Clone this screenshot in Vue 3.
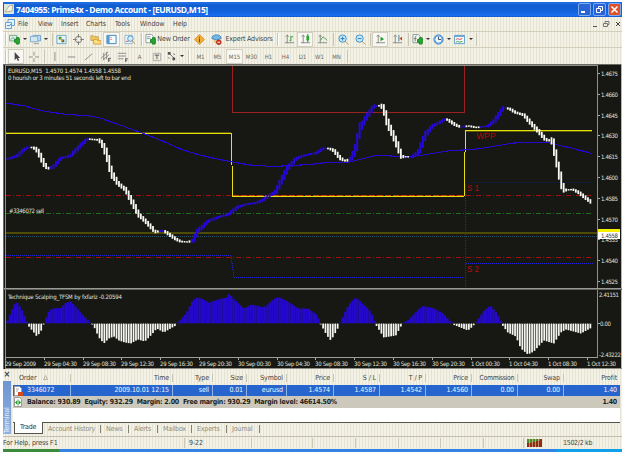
<template>
  <div class="window">
    <header class="title-bar">
      <svg class="app-icon" viewBox="0 0 10 10"><path d="M0 0h10v10H0z" fill="#dce6dc" /><path d="M1 8l4-6 4-1-1 6z" fill="#f8f5df" stroke="#9a9977" stroke-width=".7" /></svg>
      <h1>7404955: Prime4x - Demo Account - [EURUSD,M15]</h1>
      <div class="caption-buttons">
        <span class="caption"><i class="minimise"></i></span>
        <span class="caption"><svg viewBox="0 0 11 11"><path d="M4.5 4V2.5h4v4H7M2.5 4.5h4v4h-4z" fill="none" stroke="#fff" /></svg></span>
        <span class="caption close"><svg viewBox="0 0 11 11"><path d="M2.5 2.5l6 6m0-6l-6 6" stroke="#fff" stroke-width="1.6" /></svg></span>
      </div>
    </header>

    <nav class="menu-bar">
      <svg class="menu-icon" viewBox="0 0 10 10"><path d="M.5 3.500h6v6h-6zM3 3V.5h6.500v6H7" fill="#e6f2fa" stroke="#6aa3d2" /><path d="M2 7l1-1 1 1 2-2" fill="none" stroke="#4a91cc" /></svg>
      <span v-for="m in menus" :key="m.text" :style="{ width: m.w + 'px' }">{{ m.text }}</span>
      <svg class="child-buttons" viewBox="0 0 30 8"><path d="M2 6.500h4" stroke="#555" /><path d="M14 3V1.500h4v3h-2M12.500 3.500h4v3h-4z" fill="none" stroke="#777" /><path d="M25 2l4 4m0-4l-4 4" stroke="#444" /></svg>
    </nav>

    <div v-for="(bar, b) in toolbars" :key="b" class="toolbar">
      <span
        v-for="(t, i) in bar"
        :key="i"
        class="tool"
        :class="[t.type, { pressed: t.pressed }]"
        :style="{ width: t.w + 'px' }"
      >
        <svg v-if="t.icon" viewBox="0 0 12 12">
          <path v-for="(p, n) in icons[t.icon]" :key="n" :d="p[0]" :fill="p[1]" :stroke="p[2] || 'none'" />
        </svg>
        <template v-else>{{ t.text }}</template>
      </span>
    </div>

    <svg class="chart" viewBox="3 64 619 305" shape-rendering="crispEdges">
      <rect x="3" y="64" width="619" height="305" fill="#171813" />
      <path d="M3 64.500H622M3.500 64V369" stroke="#6b6a62" />
      <path d="M5.500 369V65.500H597.500V358" fill="none" stroke="#8d8f88" />
      <path d="M621.500 64V369" stroke="#b9b7a8" />

      <!-- horizontal levels -->
      <path d="M6 195.500H593M6 257.500H593" class="level" stroke="#a20d0d" />
      <path d="M6 213.500H593" class="level" stroke="#1f6e1f" />
      <rect x="6" y="232" width="591" height="2" fill="#4e4b06" />
      <path d="M6 236.500H597" stroke="#24506a" stroke-dasharray="1 1" />

      <!-- pivot steps -->
      <path d="M232.500 66V112.500H464.500V66" fill="none" stroke="#9b2020" />
      <path d="M6 255.500H231.500M233.500 277.500H464M466 263.500H593M231.500 256v7M232.500 263v7M233.500 270v7" fill="none" stroke="#1f24d8" stroke-dasharray="1 1" />
      <path d="M465.500 182.500H593" stroke="#0d1c38" />
      <path d="M465.500 184V288" stroke="#1f24d8" stroke-dasharray="1 1" />
      <path d="M6 132.500H231M466 131.500H592" stroke="#5c5606" />
      <path d="M6 133.500H231.500L232.500 196.500H464L465.500 130.500H592" fill="none" stroke="#e6e010" />
      <path d="M233 195.500H464" stroke="#c24a06" stroke-dasharray="6 2" />

      <polyline :points="average" fill="none" stroke="#2409d0" stroke-width="1.100" />
      <g shape-rendering="geometricPrecision">
        <rect v-for="c in candles" :key="c.x" :x="c.x" :y="c.y" :width="c.up ? 2 : 1.8" :height="c.h" :fill="c.up ? '#2409d8' : '#fbfbf6'" />
        <rect v-for="c in histogram" :key="c.x" :x="c.x" :y="c.y" :width="c.up ? 2.43 : 1.75" :height="c.h" :fill="c.up ? '#2408cc' : '#f6f6f0'" />
      </g>

      <path d="M4 288.500H622" stroke="#999b94" /><path d="M4 289.500H622" stroke="#5f625c" />
      <path d="M6 323.500H592" stroke="#171813" stroke-dasharray="1 1" opacity=".5" />

      <path d="M5 357.500H598" stroke="#9b9d96" /><path d="M5 368.500H622" stroke="#8d8f88" />
      <path v-for="t in times" :key="t.text" :d="`M${t.x + 0.500} 358v2`" stroke="#aaa" />
      <path v-for="p in prices" :key="p.text" :d="`M598 ${p.y}h2`" stroke="#aaa" />
      <path d="M598 323.500h2" stroke="#aaa" />

      <g class="chart-text">
        <text x="8" y="73" textLength="113">EURUSD,M15&#160; 1.4570 1.4574 1.4558 1.4558</text>
        <text x="8" y="79.500" textLength="123">0 hourish or 3 minutes 51 seconds left to bar end</text>
        <text x="9" y="212.500" textLength="35">#3346072 sell</text>
        <text x="8" y="299" textLength="114">Technique Scalping_TFSM by fxfariz -0.20594</text>
        <text v-for="p in prices" :key="p.text" x="601" :y="p.y + 2.500" textLength="17">{{ p.text }}</text>
        <text x="599" y="297" textLength="20">2.41151</text>
        <text x="600" y="326" textLength="11">0.00</text>
        <text x="599" y="356.500" textLength="22">-2.43222</text>
        <text v-for="t in times" :key="t.text" :x="t.x" y="366" :textLength="t.w">{{ t.text }}</text>
      </g>
      <rect x="598" y="229" width="22" height="4" fill="#f5ef00" />
      <rect x="598" y="232" width="22" height="7" fill="#fff" />
      <text x="601" y="238" textLength="17" class="chart-text current">1.4558</text>
      <g class="pivot-text">
        <text x="476.500" y="138.500" textLength="19" lengthAdjust="spacingAndGlyphs">WPP</text>
        <text x="467" y="191" textLength="12" lengthAdjust="spacingAndGlyphs">S 1</text>
        <text x="467" y="271.500" textLength="12" lengthAdjust="spacingAndGlyphs">S 2</text>
      </g>
    </svg>

    <section class="terminal">
      <aside>
        <b>×</b>
        <span>Terminal</span>
      </aside>
      <div class="panel">
        <div class="row head">
          <span v-for="(c, i) in columns" :key="i" :style="{ width: c.w + 'px' }">{{ c.head }}<svg v-if="i === 0" viewBox="0 0 5 5"><path d="M.5 4.500l2-4 2 4z" fill="none" stroke="#b3b09f" /></svg></span>
        </div>
        <div class="row order">
          <svg class="row-icon" viewBox="0 0 9 10"><path d="M.5.500h5l2 2v7h-7z" fill="#fff" stroke="#a99" /><path d="M4 6h5v4H4z" fill="#d24b20" /><path d="M2 3h3M2 5h2" stroke="#aaa" /></svg>
          <span v-for="(c, i) in columns" :key="i" :style="{ width: c.w + 'px' }">{{ c.value }}</span>
        </div>
        <div class="row balance">
          <svg class="row-icon" viewBox="0 0 9 10"><path d="M.5.500h5l2 2v7h-7z" fill="#fff" stroke="#999" /><path d="M1 5.500l2-2v4zM7 5.500l-2-2v4z" fill="#1c9a28" /><path d="M4 2.500v6" stroke="#1c9a28" /></svg>
          <strong>Balance: 930.89&#160; Equity: 932.29&#160; Margin: 2.00&#160; Free margin: 930.29&#160; Margin level: 46614.50%</strong>
          <strong class="total">1.40</strong>
        </div>
        <div class="blank"></div>
        <div class="tabs">
          <span class="active">Trade</span>
          <span v-for="t in tabs" :key="t.text" :style="{ width: t.w + 'px' }">{{ t.text }}</span>
        </div>
      </div>
    </section>

    <footer class="status-bar">
      <span v-for="(s, i) in status" :key="i" :style="{ width: s.w + 'px' }">{{ s.text }}</span>
      <svg viewBox="0 0 15 8"><path d="M0 0h15v8H0z" fill="#8d2d14" /><path d="M0 0h5v4H0zM5 0h4v3H5zM9 0h4v2H9z" fill="#4f8a2c" /><path d="M2.500 0v8M5.500 0v8M8.500 0v8M11.500 0v8" stroke="#e9c9a8" stroke-width=".6" /></svg>
      <em>1502/2 kb</em>
    </footer>
    <div class="taskbar"><i class="start"></i><i class="tray"></i></div>
  </div>
</template>

<script setup>
const menus = [
  { text: 'File', w: 20 },
  { text: 'View', w: 23 },
  { text: 'Insert', w: 25 },
  { text: 'Charts', w: 29 },
  { text: 'Tools', w: 25 },
  { text: 'Window', w: 33 },
  { text: 'Help', w: 20 }
]

const icon = (name, w, pressed = false) => ({ icon: name, w, pressed })
const label = (text, w, pressed = false) => ({ text, w, pressed, type: 'period' })
const sep = (w) => ({ type: 'sep', w })
const drop = (w) => ({ type: 'drop', text: '', w })

const toolbars = [
  [
    { type: 'grip', w: 5 }, icon('newChart', 13), drop(7), icon('profiles', 14), drop(8), sep(4),
    icon('market', 15), icon('data', 18), icon('navigator', 16), icon('terminal', 17, true), icon('tester', 19),
    { type: 'grip', w: 5 }, icon('newOrder', 12), { text: 'New Order', w: 35, type: 'words' },
    icon('meta', 17), icon('expert', 16), { text: 'Expert Advisors', w: 50, type: 'words' },
    { type: 'grip', w: 8 }, icon('bars', 15), icon('candle', 16, true), icon('line', 18), sep(4),
    icon('zoomIn', 16), icon('zoomOut', 18), sep(3), icon('scroll', 16, true), icon('shift', 18), sep(4),
    icon('indicator', 14), drop(7), icon('clock', 14), drop(7), icon('template', 15), drop(7), sep(4)
  ],
  [
    { type: 'grip', w: 5 }, icon('pointer', 16, true), icon('cross', 18), sep(4),
    icon('vertical', 17), icon('horizontal', 17), icon('trend', 17), icon('channel', 17), icon('fibo', 17),
    label('A', 17), icon('textBox', 17), icon('arrows', 13), drop(8), { type: 'grip', w: 6 },
    label('M1', 17), label('M5', 17), label('M15', 17, true), label('M30', 17), label('H1', 17),
    label('H4', 17), label('D1', 17), label('W1', 17), label('MN', 17), sep(4)
  ]
]

const none = 'none'
const plus = ['M6 6h2V4h3v2h2v3h-2v2H8V9H6z', '#29a531', '#16841f']
const axes = 'M3.500 1v9M1 9.500h10M2 3l1.500-2L5 3'
const lens = (sign) => [
  ['M8 8l3.500 3.500', none, '#c89032'],
  ['M7 7l3.500 4', none, '#dfb76a'],
  ['M1 5a4 4 0 1 0 8 0a4 4 0 1 0-8 0', '#c5e5f8', '#388fc9'],
  [sign, none, '#2478b8']
]
// every entry is a list of [path, fill, stroke] on a 12 x 12 grid
const icons = {
  newChart: [['M.5 1.500h8v6h-8z', '#dcefe0', '#6ca58b'], ['M2 6l2-2 2 1', none, '#4b8fb0'], plus],
  profiles: [['M3.500 1.500h8v6h-8z', '#bdddf2', '#6aa3ca'], ['M.5 2.500h8v6h-8z', '#d3e6f3', '#7fa9cb'], ['M4 10.500h6', none, '#999']],
  market: [['M1 1.500h10v9H1z', '#e9f5fa', '#6aa9cb'], ['M3 3h3v3H3z', '#2b9a3c'], ['M6 6h3v3H6z', '#3c6538'], ['M4 4l4 4', none, '#d59b18']],
  data: [['M2.500 6a3.500 3.500 0 1 0 7 0a3.500 3.500 0 1 0-7 0', none, '#777'], ['M6 0v4M6 8v4M0 6h4M8 6h4', none, '#777']],
  navigator: [['M1 2h3l1 1h4v4H1z', '#f1ca5b', '#c99b47'], ['M4 6h3l1 1h4v4H4z', '#ffdf7b', '#d59d45']],
  terminal: [['M1 1.500h10v9H1z', '#f4fafd', '#367fba'], ['M1 1h3v9H1z', '#559dd0'], ['M5 4h1M5 6h1', none, '#c33']],
  tester: [['M1 1.500h8v9H1z', '#eef6fb', '#8fb9d3'], ['M4 5a3 3 0 1 0 6 0a3 3 0 1 0-6 0', '#d7ecf8', '#4592c5'], ['M9 7l3 4', none, '#c8963c'], ['M2 8h3', none, '#c55']],
  newOrder: [['M1 .500h6l2 2v7H1z', '#fff', '#899'], ['M2 3h4M2 5h4', none, '#7c9ab3'], plus],
  meta: [['M6 .500L11.500 6 6 11.500.5 6z', '#efac39', '#d59a3c'], ['M6 3v1M6 5v4', none, '#63430d']],
  expert: [['M1 5q0-4 5-4t5 4q-5 3-10 0z', '#74b8e7', '#3b83bb'], ['M3 6q3 2 6 0v3q-3 2-6 0z', '#e9c078'], ['M6 9a2.500 2.500 0 1 0 5 0a2.500 2.500 0 1 0-5 0', '#d83c22', '#a92414'], ['M7 9h3', none, '#fff']],
  bars: [[axes, none, '#888'], ['M7.500 2v6M6 7h1M8 3h2', none, '#249c31']],
  candle: [[axes, none, '#888'], ['M8.500 0v9', none, '#15801f'], ['M7 2h3v5H7z', '#27a934']],
  line: [[axes, none, '#888'], ['M4 7q2-5 4-3l3 3', none, '#319a3a']],
  zoomIn: lens('M3 5h4M5 3v4'),
  zoomOut: lens('M3 5h4'),
  scroll: [[axes, none, '#888'], ['M6 3l4 2.500-4 2.500z', '#20a02c']],
  shift: [[axes, none, '#888'], ['M7.500 1v7', none, '#457fa8'], ['M8 5l3-2v4z', '#cc3c20']],
  indicator: [['M1 .500h6l2 2v7H1z', '#f4f5f0', '#899'], ['M5 2Q3 2 3.500 8M2 5h3', none, '#777'], plus],
  clock: [['M1 6a5 5 0 1 0 10 0a5 5 0 1 0-10 0', '#eaf5ff', '#1d70bd'], ['M2 6a4 4 0 1 0 8 0a4 4 0 1 0-8 0', none, '#4a9cdf'], ['M6 3v3h3', none, '#345']],
  template: [['M.5 1.500h11v9H.5z', '#f3f9fd', '#5b9bc8'], ['M1 2.500h10', none, '#3b88c0'], ['M2 6l2-1 2 1 3-1', none, '#c44'], ['M2 9l2-1 2 1 3-1', none, '#3a9a40']],
  pointer: [['M4 1v9l2-2 1.500 3 1.500-1-1.500-2.500H10z', '#444']],
  cross: [['M6.500 1v4M6.500 8v4M1 6.500h4M8 6.500h4', none, '#888']],
  vertical: [['M6.500 1v10', none, '#888']],
  horizontal: [['M2 6.500h8', none, '#888']],
  trend: [['M2 10l8-7', none, '#888']],
  channel: [['M1 8l8-7M3 10l7-6M4 2v8M7 1v8', none, '#888'], ['M9 8h3M9 10h2M9.500 8v4', none, '#555']],
  fibo: [['M1 2.500h9M1 5.500h9M1 8.500h6', none, '#888'], ['M9.500 8v4M9 8.500h3M9 10.500h2', none, '#555']],
  textBox: [['M2.500 2.500h8v8h-8z', none, '#aaa'], ['M4 4.500h5M6.500 4v5', none, '#555']],
  arrows: [['M4 3l5 5', none, '#777'], ['M2 1h3v3H2zM7 7h3v3H7z', '#555'], ['M8 3l2 1M2 7l2 1', none, '#777']]
}

const columns = [
  { head: 'Order', value: '3346072', w: 58 },
  { head: 'Time', value: '2009.10.01 12:15', w: 102 },
  { head: 'Type', value: 'sell', w: 40 },
  { head: 'Size', value: '0.01', w: 34 },
  { head: 'Symbol', value: 'eurusd', w: 40 },
  { head: 'Price', value: '1.4574', w: 47 },
  { head: 'S / L', value: '1.4587', w: 46 },
  { head: 'T / P', value: '1.4542', w: 46 },
  { head: 'Price', value: '1.4560', w: 46 },
  { head: 'Commission', value: '0.00', w: 46 },
  { head: 'Swap', value: '0.00', w: 46 },
  { head: 'Profit', value: '1.40', w: 56 }
]

const tabs = [
  { text: 'Account History', w: 58 },
  { text: 'News', w: 28 },
  { text: 'Alerts', w: 29 },
  { text: 'Mailbox', w: 34 },
  { text: 'Experts', w: 35 },
  { text: 'Journal', w: 33 }
]

const status = [
  { text: 'For Help, press F1', w: 182 },
  { text: '9-22', w: 67 },
  { text: '', w: 61 },
  { text: '', w: 43 },
  { text: '', w: 43 },
  { text: '', w: 42 },
  { text: '', w: 43 },
  { text: '', w: 40 }
]

const prices = ['1.4675', '1.4660', '1.4645', '1.4630', '1.4615', '1.4600', '1.4585', '1.4570', '1.4555', '1.4540', '1.4525']
  .map((text, i) => ({ text, y: 73.5 + i * 20.8 }))

const times = [
  '29 Sep 2009', '29 Sep 04:30', '29 Sep 08:30', '29 Sep 12:30', '29 Sep 16:30', '29 Sep 20:30',
  '30 Sep 00:30', '30 Sep 04:30', '30 Sep 08:30', '30 Sep 12:30', '30 Sep 16:30', '30 Sep 20:30',
  '1 Oct 00:30', '1 Oct 04:30', '1 Oct 08:30', '1 Oct 12:30'
].map((text, i) => ({ text, x: Math.round(5 + i * 38.8), w: text.startsWith('1 ') ? 29 : i === 0 ? 31 : 33 }))

const average = '6,103 25,106 43,111 63,114 90,116 100,118 120,125 142,133 160,140 183,150 200,155 217,159 233,162 250,165 273,166.5 310,164.5 327,162.5 348,162.5 373,156 383,155.5 407,157 420,155.5 447,151 477,149 513,143 547,142.5 573,148.5 592,153.5'

const pricePath = [
  [6, 159], [10, 158], [17, 155.5], [22, 150.5], [27, 147.5], [32, 147.5], [36, 150], [39, 155], [44, 165], [48, 168.5],
  [52, 167], [60, 158.5], [70, 155.5], [80, 145], [87, 139], [98, 140], [102, 145], [106, 155], [111, 173], [117, 183],
  [125, 190], [132, 203], [138, 214.5], [147, 223.5], [155, 232], [161, 230.5], [165, 232], [175, 239], [180, 241.5],
  [187, 242], [192, 240.5], [197, 231], [207, 221.5], [215, 218], [228, 214], [237, 207], [247, 204], [255, 203],
  [262, 200], [267, 196.5], [275, 191.5], [280, 181.5], [287, 168], [295, 159], [303, 155.5], [315, 153], [323, 148.5],
  [328, 148.5], [333, 150.5], [340, 158.5], [345, 161], [350, 158.5], [355, 148], [359, 129], [365, 118], [373, 106.5],
  [380, 105.5], [383, 110], [387, 123], [393, 136.5], [398, 148.5], [401, 156.5], [411, 157], [418, 151.5], [425, 134],
  [432, 126], [445, 119], [448, 120.5], [455, 125], [460, 127], [468, 126], [476, 127.5], [487, 126], [493, 121.5],
  [503, 107.5], [509, 109], [515, 112.5], [523, 115], [530, 123], [537, 130.5], [545, 139.5], [551, 141], [554, 150],
  [557, 167], [562, 187], [565, 190], [572, 189.5], [578, 192.5], [587, 199.5], [593, 204]
]
const risingRanges = [[0, 30], [50, 88], [159, 163], [189, 326], [347, 376], [408, 446], [460, 465], [478, 506]]

const oscillator = [
  [6, 2], [10, 12], [15, 22], [20, 15], [25, 4], [26.5, 0], [28, -3], [33, -9], [36, -13], [40, -8], [43, 0], [47, 11],
  [51, 15], [60, 15.5], [65, 21], [70, 22], [76, 15], [83, 7], [89, 1], [91, 0], [93, -3], [98, -14], [103, -20],
  [108, -15], [113, -13], [118, -17], [124, -19], [130, -20], [137, -16], [144, -18], [150, -12], [156, -5], [163, -9],
  [168, -6], [175, -2], [176, 0], [185, 10], [191, 22], [195, 26], [200, 25], [208, 21], [217, 24], [225, 26], [228, 30],
  [233, 24], [243, 15], [250, 19], [263, 16], [272, 24], [277, 26.5], [285, 23], [297, 15], [307, 15], [315, 9], [319, 2],
  [320, -1], [326, -12], [330, -17], [333, -12], [338, -3], [339, 0], [345, 14], [350, 22], [355, 26], [360, 21],
  [367, 15], [372, 7], [374, 0], [376, -3], [383, -14], [395, -12], [400, -3], [401, 0], [408, 4], [417, 14], [422, 17.5],
  [433, 15], [442, 10], [450, 1], [452, -1], [467, -7], [472, -3], [474, 0], [477, 4], [483, 13], [489, 18], [495, 11],
  [500, 2], [501, -1], [507, -9], [515, -13], [520, -25], [527, -31], [533, -28], [543, -17], [553, -20], [560, -9],
  [565, -6], [580, -10], [593, -3]
]

const valueAt = (points, x) => {
  const i = Math.max(1, points.findIndex((p) => p[0] >= x))
  const [x0, y0] = points[i - 1]
  const [x1, y1] = points[i]
  return y0 + ((y1 - y0) * (x - x0)) / (x1 - x0)
}

const step = 2.43
const candles = []
const histogram = []
for (let i = 0; i < 241; i++) {
  const x = 6.3 + i * step
  const mid = valueAt(pricePath, x)
  const slope = Math.abs(valueAt(pricePath, Math.min(592, x + 2)) - valueAt(pricePath, Math.max(6, x - 2)))
  const h = Math.min(18, 1.2 + slope * 1.1)
  candles.push({ x, y: mid - h / 2, h, up: risingRanges.some(([a, b]) => x >= a && x <= b) })

  const v = valueAt(oscillator, x)
  const size = Math.max(1, Math.abs(v))
  histogram.push({ x, y: v > 0 ? 323.5 - size : 323.5, h: size, up: v > 0 })
}
</script>

<style>
body {
  background: #fff;
}
</style>

<style scoped>
.window {
  box-sizing: border-box;
  width: 625px;
  height: 452px;
  padding: 2px 3px 0;
  display: flex;
  flex-direction: column;
  overflow: hidden;
  font-family: "DejaVu Sans Condensed", "DejaVu Sans", sans-serif;
  font-size: 7px;
  color: #45443e;
  white-space: nowrap;
}

svg {
  display: block;
  flex: none;
}

.title-bar {
  height: 15px;
  display: flex;
  align-items: center;
  padding: 0 1px;
  background: radial-gradient(circle at 1px 1px, #1a6be4 0.6px, transparent 0.8px) 0 0 / 2px 2px,
    linear-gradient(#2b74e8, #0751bd 25%, #0a5bd5 60%, #186ff5 90%, #0b48ae);
}

.app-icon {
  width: 10px;
  height: 10px;
}

h1 {
  margin: 0 auto 0 2px;
  color: #fff;
  font: bold 8.5px "Open Sans", sans-serif;
  letter-spacing: -0.39px;
}

.caption-buttons {
  display: flex;
  gap: 2px;
}

.caption {
  width: 11px;
  height: 11px;
  border: 0.5px solid #7fabec;
  border-radius: 2px;
  background: #2864d6;
}

.caption.close {
  background: #df512b;
}

.minimise {
  display: block;
  width: 4px;
  height: 2px;
  margin: 7px 0 0 2px;
  background: #fff;
}

.menu-bar,
.toolbar,
.terminal,
.status-bar {
  background: radial-gradient(circle at 1px 1px, #fbfaf2 0.6px, transparent 0.9px) 0 0 / 3px 2px, #e6e3d2;
}

.menu-bar {
  height: 14px;
  display: flex;
  align-items: center;
}

.menu-bar span {
  letter-spacing: -0.1px;
}

.menu-icon {
  width: 10px;
  height: 10px;
  margin: 0 3px 0 2px;
}

.child-buttons {
  width: 30px;
  height: 8px;
  margin: 0 1px 0 auto;
}

.toolbar {
  box-sizing: border-box;
  height: 17px;
  display: flex;
  align-items: center;
  border-top: 1px solid #d2cfbd;
}

.tool {
  flex: none;
  height: 15px;
  display: flex;
  align-items: center;
  justify-content: center;
}

.tool svg {
  width: 11px;
  height: 11px;
}

.pressed {
  box-sizing: border-box;
  background: #f8f7f1;
  border: 1px solid #d3d0c3;
}

.words {
  font-size: 7px;
  letter-spacing: -0.15px;
}

.period {
  font-size: 6px;
  color: #6b6a60;
}

.grip::before,
.sep::before {
  content: "";
  width: 1px;
  height: 13px;
  background: #c8c4b3;
}

.grip::before {
  border-right: 1px solid #fff;
}

.drop::before {
  content: "";
  border: 2px solid transparent;
  border-top-color: #333;
  border-bottom: 0;
}

.chart {
  width: 619px;
  height: 305px;
}

.level {
  stroke-dasharray: 5 2 1 2;
}

.chart-text {
  fill: #e4e4dd;
  font-size: 6px;
}

.chart-text.current {
  fill: #333;
}

.pivot-text {
  fill: #b30c0c;
  font: 9px "Liberation Sans", sans-serif;
}

.terminal {
  height: 68px;
  display: flex;
}

aside {
  width: 8px;
  padding-top: 1px;
  flex: none;
  display: flex;
  flex-direction: column;
}

aside b {
  height: 11px;
  font-size: 9px;
  line-height: 9px;
  text-align: center;
}

aside span {
  flex: 1;
  margin-bottom: 2px;
  padding-top: 1px;
  background: linear-gradient(#8fb1e2, #6f96d2);
  color: #eaf1fc;
  writing-mode: vertical-rl;
  transform: rotate(180deg);
  line-height: 8px;
  letter-spacing: -0.1px;
}

.panel {
  flex: 1;
  margin: 2px 2px 0;
  display: flex;
  flex-direction: column;
}

.row {
  display: flex;
  align-items: center;
  position: relative;
}

.row > span {
  box-sizing: border-box;
  flex: none;
  padding-right: 3px;
  text-align: right;
  letter-spacing: -0.1px;
  border-right: 1px solid #cbc7b5;
}

.row > span:first-of-type {
  display: flex;
  align-items: center;
  padding-left: 6px;
}

.row > span:last-of-type {
  border-right: 0;
}

.head {
  height: 14px;
}

.head span:nth-of-type(10) {
  letter-spacing: -0.4px;
}

.head svg {
  width: 5px;
  height: 5px;
  margin-left: 7px;
}

.order {
  height: 11px;
  background: radial-gradient(circle at 1px 1px, #347be3 0.5px, transparent 0.8px) 0 0 / 2px 2px, #205bc4;
  color: #f0f5ff;
}

.row.order > span {
  line-height: 11px;
  border-color: #8fb4ea;
}

.row.order > span:first-of-type {
  padding-left: 14px;
}

.row-icon {
  position: absolute;
  left: 1px;
  top: 1px;
  width: 9px;
  height: 10px;
}

.balance {
  height: 12px;
  padding: 0 3px 0 14px;
  justify-content: space-between;
  background: #ccc9bc;
  color: #1d1d1b;
  letter-spacing: -0.23px;
}

.blank {
  height: 14px;
  background: #fff;
  border-bottom: 1px solid #55544c;
}

.tabs {
  height: 13px;
  display: flex;
  align-items: center;
  color: #908d7e;
  letter-spacing: -0.18px;
}

.tabs span {
  box-sizing: border-box;
  padding-left: 5px;
  line-height: 8px;
  border-right: 1px solid #858273;
}

.tabs .active {
  width: 29px;
  height: 12px;
  margin: -2px 0 0 1px;
  background: #fff;
  border: 1px solid #55544c;
  border-top: 0;
  line-height: 11px;
  color: #33322e;
}

.status-bar {
  box-sizing: border-box;
  height: 13px;
  flex: none;
  display: flex;
  align-items: center;
  border-top: 1px solid #c2bfae;
}

.status-bar span {
  box-sizing: border-box;
  height: 10px;
  line-height: 10px;
  letter-spacing: -0.12px;
  border-right: 1px solid #cbc8b7;
}

.status-bar span + span {
  padding-left: 4px;
}

.status-bar svg {
  width: 15px;
  height: 8px;
  margin-left: 3px;
}

.status-bar em {
  margin-left: 21px;
  font-style: normal;
  letter-spacing: -0.3px;
}

.taskbar {
  height: 3px;
  flex: none;
  display: flex;
  justify-content: space-between;
  background: #3482e5;
}

.start {
  width: 56px;
  background: #3c8b3c;
}

.tray {
  width: 66px;
  background: #119fe9;
}
</style>
